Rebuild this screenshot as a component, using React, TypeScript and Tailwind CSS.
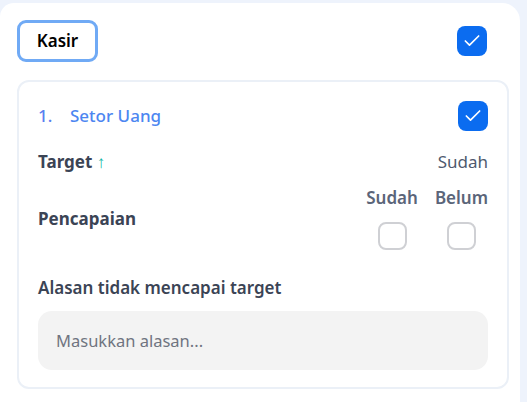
import { Check } from "lucide-react";

function CheckedBox({ className = "" }: { className?: string }) {
    return (
        <div className={`w-[30px] h-[30px] rounded-[8px] bg-[#0b6cf0] flex items-center justify-center ${className}`}>
            <Check size={20} strokeWidth={2} className="text-white" />
        </div>
    );
}

function EmptyBox() {
    return <div className="w-[29px] h-[28px] rounded-[8px] border-2 border-[#cfd0d4] bg-white" />;
}

export default function App() {
    return (
        <div className="w-[527px] h-[402px] bg-[#eef3fc] pt-[3px] pr-[7px] font-['Noto_Sans',sans-serif] overflow-hidden">
            <div className="bg-white rounded-tr-[18px] rounded-tl-[14px] h-full pl-[17px] pr-[11px] pt-[17px]">
                <div className="flex items-center justify-between">
                    <button className="w-[81px] h-[42px] rounded-[9px] border-[3px] border-[#70aaf5] text-[17px] font-semibold text-black">
                        Kasir
                    </button>
                    <CheckedBox className="mr-[22px]" />
                </div>

                <div className="mt-[18px] border-2 border-[#ebf0f7] rounded-[12px] px-[19px] pt-[19px] pb-[17px]">
                    <div className="flex items-center justify-between h-[30px]">
                        <div className="text-[17px] font-medium text-[#4c86f1] flex">
                            <span className="w-[32px] text-[#5a7ff0]">1.</span>
                            <span>Setor Uang</span>
                        </div>
                        <CheckedBox />
                    </div>

                    <div className="mt-[19px] flex items-center justify-between h-[24px] text-[17px]">
                        <div className="font-bold text-[#3b4455]">
                            Target <span className="text-[#12b5a6] font-semibold">↑</span>
                        </div>
                        <span className="text-[#4f5a6e]">Sudah</span>
                    </div>

                    <div className="mt-[12px] flex items-center justify-between">
                        <span className="text-[17px] font-bold text-[#3b4455] mt-[1px]">Pencapaian</span>
                        <div className="flex gap-[17px]">
                            <div className="flex flex-col items-center">
                                <span className="text-[17px] font-semibold text-[#5b6579] leading-[24px]">Sudah</span>
                                <div className="mt-[12px]"><EmptyBox /></div>
                            </div>
                            <div className="flex flex-col items-center">
                                <span className="text-[17px] font-semibold text-[#5b6579] leading-[24px]">Belum</span>
                                <div className="mt-[12px]"><EmptyBox /></div>
                            </div>
                        </div>
                    </div>

                    <div className="mt-[26px] text-[17px] font-semibold text-[#3b4455] leading-[24px]">
                        Alasan tidak mencapai target
                    </div>
                    <input
                        type="text"
                        placeholder="Masukkan alasan..."
                        className="mt-[11px] w-full h-[59px] rounded-[14px] bg-[#f3f3f3] px-[18px] text-[16.5px] text-[#3b4455] placeholder:text-[#6f7480] outline-none"
                    />
                </div>
            </div>
        </div>
    );
}
